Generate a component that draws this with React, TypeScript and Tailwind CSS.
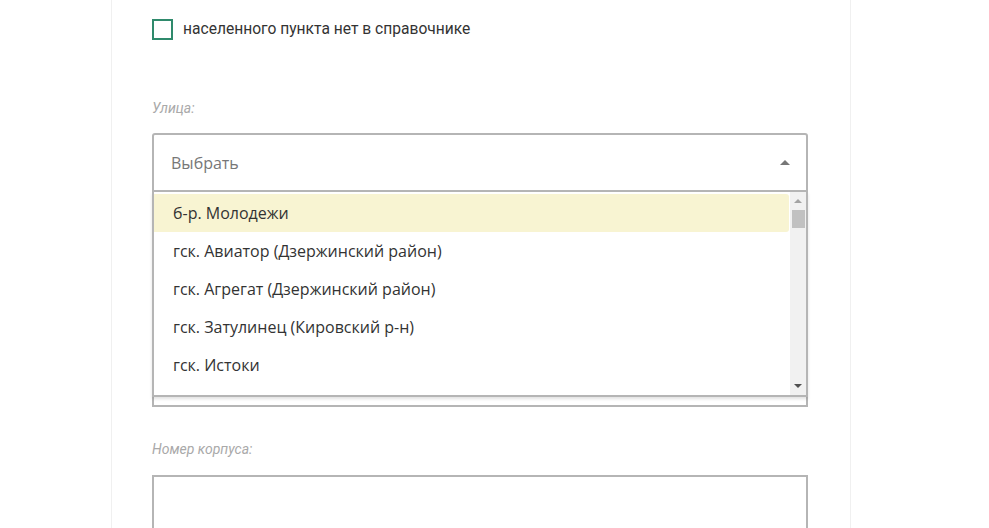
const streets = [
  'б-р. Молодежи',
  'гск. Авиатор (Дзержинский район)',
  'гск. Агрегат (Дзержинский район)',
  'гск. Затулинец (Кировский р-н)',
  'гск. Истоки',
]

function FieldLabel({ children }: { children: React.ReactNode }) {
  return (
    <div className="font-['Roboto',sans-serif] text-[14px] italic leading-4 text-[#a9a9a9]">
      {children}
    </div>
  )
}

function StreetDropdown() {
  return (
    <div className="absolute left-0 right-0 top-full z-10 flex h-[205px] border-x-2 border-b-2 border-[#b5b5b5] bg-white shadow-[0_2px_3px_rgba(0,0,0,0.12)]">
      <ul className="flex-1 pt-[2px]">
        {streets.map((s, i) => (
          <li
            key={s}
            className={
              i === 0
                ? 'mr-[1px] flex h-[38px] items-center rounded-r-[3px] bg-[#f8f4d2] pl-[19px] text-[16px] text-[#333]'
                : 'flex h-[38px] items-center pl-[19px] text-[16px] text-[#333]'
            }
          >
            {s}
          </li>
        ))}
      </ul>
      <div className="flex w-[16px] flex-col items-center bg-[#f1f1f1]">
        <div className="mt-[7px] h-0 w-0 border-x-[4px] border-b-[4px] border-x-transparent border-b-[#a3a3a3]" />
        <div className="mt-[7px] h-[18px] w-[13px] bg-[#c1c1c1]" />
        <div className="flex-1" />
        <div className="mb-[7px] h-0 w-0 border-x-[4px] border-t-[4px] border-x-transparent border-t-[#505050]" />
      </div>
    </div>
  )
}

export default function App() {
  return (
    <div className="h-[528px] overflow-hidden bg-white font-['Open_Sans',sans-serif]">
      <div className="ml-[111px] h-full w-[740px] border-x border-[#f0f0f0] pl-[40px]">
        <label className="flex items-center pt-[18px]">
          <span className="h-[21px] w-[21px] border-2 border-[#2f8a6c] bg-white" />
          <span className="ml-[10px] font-['Roboto',sans-serif] text-[15.6px] text-[#333]">
            населенного пункта нет в справочнике
          </span>
        </label>

        <div className="mt-[59px]">
          <FieldLabel>Улица:</FieldLabel>
        </div>

        <div className="relative mt-[17px] w-[656px]">
          <div className="flex h-[59px] items-center justify-between rounded-t-[3px] border-2 border-[#b5b5b5] bg-white pl-[17px] pr-[16px]">
            <span className="text-[16px] text-[#777]">Выбрать</span>
            <span className="h-0 w-0 border-x-[5px] border-b-[5px] border-x-transparent border-b-[#777]" />
          </div>
          <StreetDropdown />
        </div>

        {/* house number field, hidden behind the open list */}
        <div className="mt-[155px] h-[60px] w-[656px] border-2 border-[#b5b5b5] bg-white" />

        <div className="mt-[34px]">
          <FieldLabel>Номер корпуса:</FieldLabel>
        </div>
        <div className="mt-[18px] h-[60px] w-[656px] border-2 border-[#b5b5b5] bg-white" />
      </div>
    </div>
  )
}
